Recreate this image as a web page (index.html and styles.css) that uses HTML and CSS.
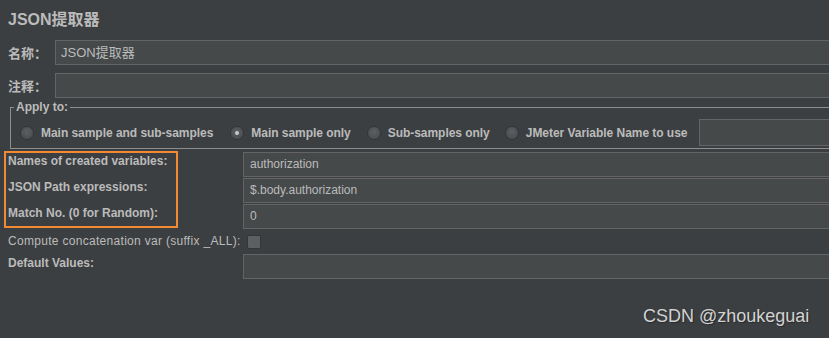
FILE: index.html
```html
<!DOCTYPE html>
<html>
<head>
<meta charset="utf-8">
<link rel="stylesheet" href="styles.css">
</head>
<body>
<div class="page">
  <h1 class="title">JSON提取器</h1>
  <div class="row row-name">
    <span class="cn-label">名称：</span>
    <div class="field">JSON提取器</div>
  </div>
  <div class="row row-comment">
    <span class="cn-label">注释：</span>
    <div class="field"></div>
  </div>
  <fieldset class="apply">
    <legend class="apply-legend">Apply to:</legend>
    <div class="radios">
      <span class="radio"></span><span class="radio-text r1">Main sample and sub-samples</span>
      <span class="radio checked"></span><span class="radio-text r2">Main sample only</span>
      <span class="radio"></span><span class="radio-text r3">Sub-samples only</span>
      <span class="radio"></span><span class="radio-text r4">JMeter Variable Name to use</span>
      <div class="field var-field"></div>
    </div>
  </fieldset>
  <div class="params">
    <span class="plabel">Names of created variables:</span>
    <div class="field pfield">authorization</div>
    <span class="plabel">JSON Path expressions:</span>
    <div class="field pfield">$.body.authorization</div>
    <span class="plabel">Match No. (0 for Random):</span>
    <div class="field pfield">0</div>
    <div class="concat">
      <span class="concat-label">Compute concatenation var (suffix _ALL):</span>
      <span class="checkbox"></span>
    </div>
    <span class="plabel">Default Values:</span>
    <div class="field pfield"></div>
  </div>
  <div class="highlight"></div>
  <div class="watermark">CSDN @zhoukeguai</div>
</div>
</body>
</html>
```
FILE: styles.css
```css
html, body {
  margin: 0;
  padding: 0;
}
body {
  width: 829px;
  height: 338px;
  overflow: hidden;
  background: #3c3f41;
  color: #bbbbbb;
  font-family: "Liberation Sans", "Noto Sans CJK SC", sans-serif;
  font-size: 12px;
}
.page {
  position: relative;
  width: 829px;
  height: 338px;
}
.title {
  margin: 0;
  padding: 10px 8px 0;
  height: 20px;
  line-height: 20px;
  font-size: 16px;
  font-weight: bold;
  color: #bbbbbb;
}
.row {
  display: flex;
  align-items: center;
  padding-left: 8px;
}
.row-name {
  margin-top: 10px;
}
.row-comment {
  margin-top: 8px;
}
.cn-label {
  width: 47px;
  font-family: "Noto Sans CJK SC", sans-serif;
  font-size: 13px;
  font-weight: bold;
  color: #bbbbbb;
}
.field {
  box-sizing: border-box;
  height: 25px;
  flex: 1;
  margin-right: -20px;
  background: #45494a;
  border: 1px solid #646464;
  padding-left: 5px;
  line-height: 23px;
  font-size: 12px;
  color: #bbbbbb;
  font-family: "Liberation Sans", "Noto Sans CJK SC", sans-serif;
}
.row-name .field {
  font-size: 13px;
}
.apply {
  margin: 2px -20px 0 10px;
  padding: 5px 0 2px 9px;
  border: 1px solid #8e8e8e;
  min-width: 0;
}
.apply-legend {
  margin-left: -6px;
  padding: 0 2px;
  font-weight: bold;
  font-size: 12px;
  line-height: 14px;
}
.radios {
  display: flex;
  align-items: center;
  height: 27px;
}
.radio {
  position: relative;
  box-sizing: border-box;
  width: 14px;
  height: 14px;
  border-radius: 50%;
  background: radial-gradient(circle at 50% 40%, #5c5f61 0%, #4d5052 70%);
  border: 1px solid #333537;
  flex: none;
}
.radio.checked::after {
  content: "";
  position: absolute;
  left: 4px;
  top: 4px;
  width: 4px;
  height: 4px;
  border-radius: 50%;
  background: #c8c8c8;
}
.radio-text {
  font-weight: bold;
  margin-left: 7px;
  letter-spacing: -0.04px;
  white-space: nowrap;
}
.r1 { margin-right: 17px; }
.r2 { margin-right: 16px; }
.r3 { margin-right: 15px; }
.r4 { margin-right: 12px; }
.var-field {
  height: 27px;
}
.params {
  display: grid;
  grid-template-columns: 235px 1fr;
  grid-template-rows: 25px 25px 25px 23px 25px;
  row-gap: 1px;
  padding-left: 8px;
  margin-top: 3px;
}
.plabel {
  font-weight: bold;
  white-space: nowrap;
  line-height: 14px;
  padding-top: 2px;
}
.pfield {
  padding-left: 6px;
  margin-right: -20px;
}
.concat {
  grid-column: 1 / -1;
  display: flex;
  align-items: center;
}
.concat-label {
  white-space: nowrap;
  letter-spacing: 0.3px;
  margin-top: -2px;
}
.checkbox {
  box-sizing: border-box;
  width: 14px;
  height: 14px;
  margin-left: 6px;
  background: #5d6062;
  border: 1px solid #333537;
  border-radius: 2px;
}
.highlight {
  position: absolute;
  left: 4px;
  top: 151px;
  width: 174px;
  height: 77px;
  box-sizing: border-box;
  border: 2px solid #f28a33;
}
.watermark {
  position: absolute;
  left: 643px;
  top: 305px;
  font-size: 18px;
  line-height: 22px;
  color: #d2d2d2;
  text-shadow: 1px 1px 1px rgba(0, 0, 0, 0.35);
  white-space: nowrap;
}
```
